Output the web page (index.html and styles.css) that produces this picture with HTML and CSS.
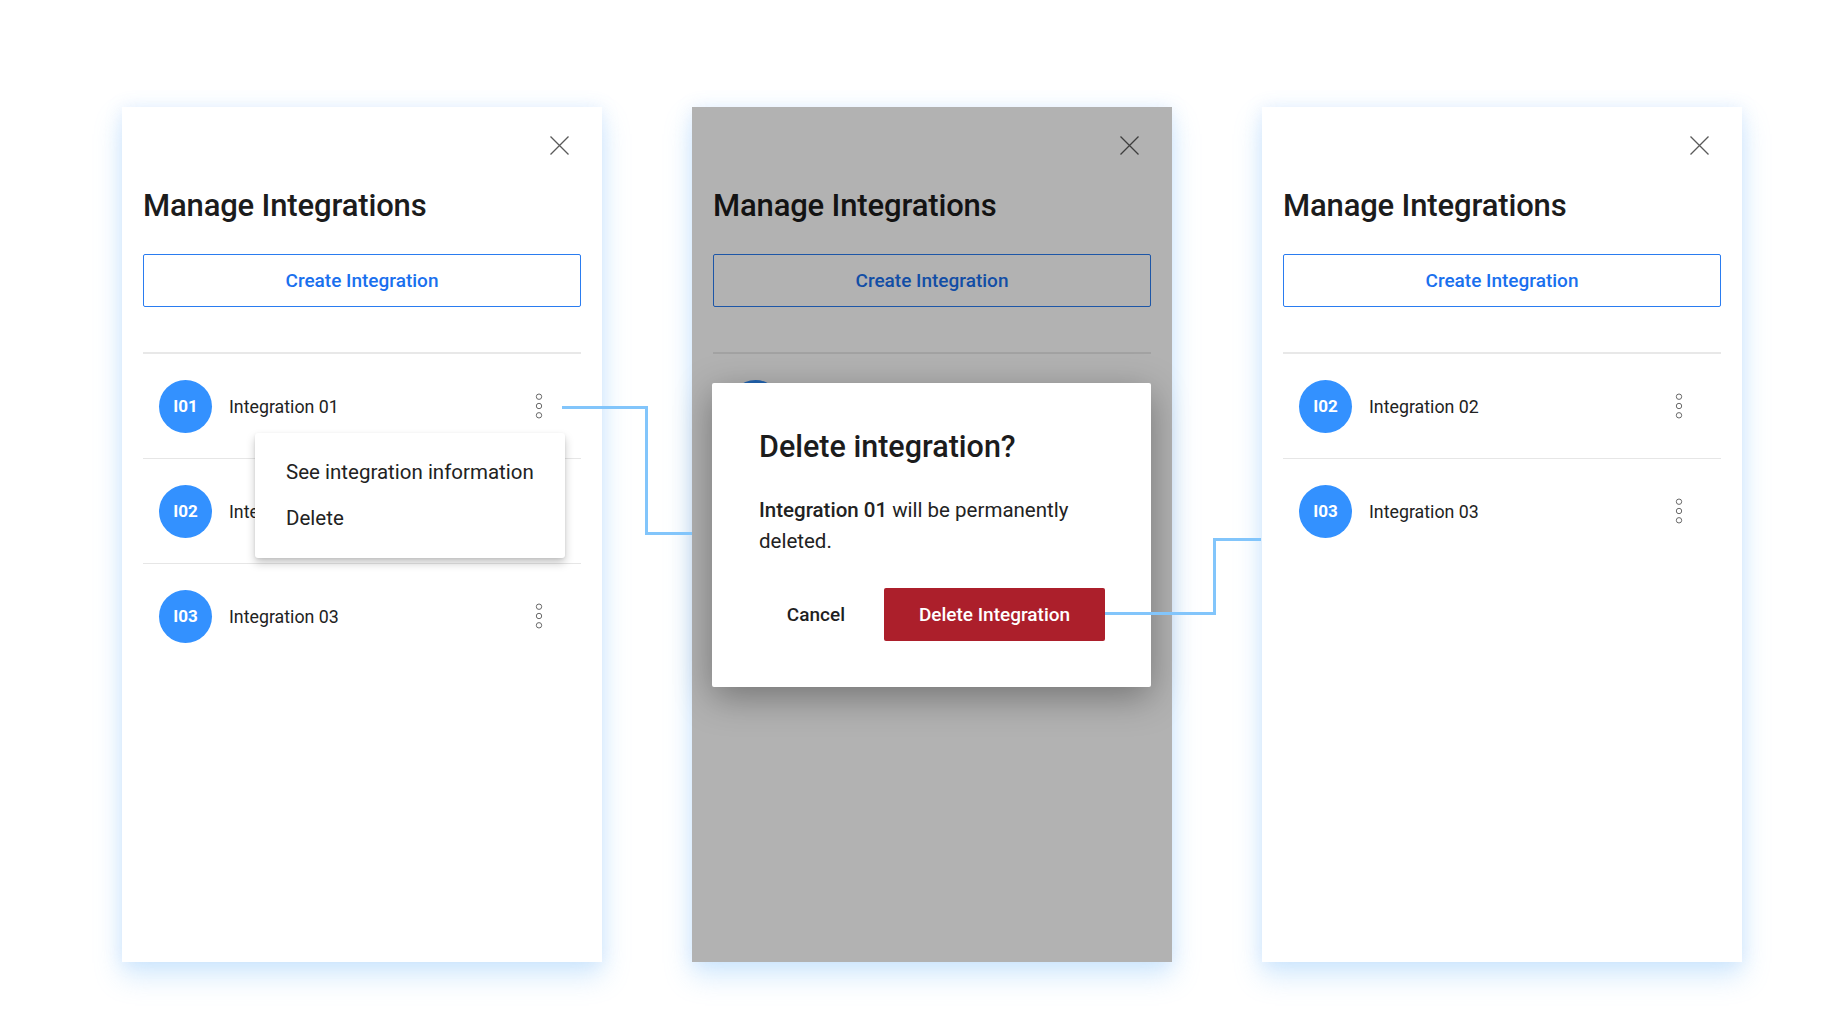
FILE: index.html
```html
<!DOCTYPE html>
<html lang="en">
<head>
<meta charset="utf-8">
<title>Manage Integrations – delete flow</title>
<link rel="stylesheet" href="styles.css">
</head>
<body>
<div class="stage">
  <!-- Panel 1: menu open -->
  <section class="panel">
    <div class="panel-top">
      <button class="close" aria-label="Close">
        <svg width="19" height="19" viewBox="0 0 19 19"><path d="M0.5 0.5L18.5 18.5M18.5 0.5L0.5 18.5" stroke="#5a5a5a" stroke-width="1.3" fill="none"/></svg>
      </button>
    </div>
    <h1 class="title">Manage Integrations</h1>
    <button class="create">Create Integration</button>
    <div class="list">
      <div class="row"><div class="avatar">I01</div><span class="name">Integration 01</span><span class="kebab"><svg width="8" height="26" viewBox="0 0 8 26"><circle cx="4" cy="3.7" r="2.7"/><circle cx="4" cy="13" r="2.7"/><circle cx="4" cy="22.3" r="2.7"/></svg></span></div>
      <div class="row"><div class="avatar">I02</div><span class="name">Integration 02</span><span class="kebab"><svg width="8" height="26" viewBox="0 0 8 26"><circle cx="4" cy="3.7" r="2.7"/><circle cx="4" cy="13" r="2.7"/><circle cx="4" cy="22.3" r="2.7"/></svg></span></div>
      <div class="row"><div class="avatar">I03</div><span class="name">Integration 03</span><span class="kebab"><svg width="8" height="26" viewBox="0 0 8 26"><circle cx="4" cy="3.7" r="2.7"/><circle cx="4" cy="13" r="2.7"/><circle cx="4" cy="22.3" r="2.7"/></svg></span></div>
    </div>
    <div class="menu">
      <div class="menu-item">See integration information</div>
      <div class="menu-item">Delete</div>
    </div>
  </section>

  <!-- Panel 2: confirm dialog -->
  <section class="panel">
    <div class="panel-top">
      <button class="close" aria-label="Close">
        <svg width="19" height="19" viewBox="0 0 19 19"><path d="M0.5 0.5L18.5 18.5M18.5 0.5L0.5 18.5" stroke="#5a5a5a" stroke-width="1.3" fill="none"/></svg>
      </button>
    </div>
    <h1 class="title">Manage Integrations</h1>
    <button class="create">Create Integration</button>
    <div class="list" aria-hidden="true">
      <div class="row"><div class="avatar"></div></div>
      <div class="row"><div class="avatar"></div></div>
      <div class="row"><div class="avatar"></div></div>
    </div>
    <div class="scrim"></div>
    <div class="dialog" role="dialog">
      <h2 class="dialog-title">Delete integration?</h2>
      <p class="dialog-body"><strong>Integration 01</strong> will be permanently deleted.</p>
      <div class="dialog-actions">
        <button class="cancel">Cancel</button>
        <button class="danger">Delete Integration</button>
      </div>
    </div>
  </section>

  <!-- Panel 3: result -->
  <section class="panel">
    <div class="panel-top">
      <button class="close" aria-label="Close">
        <svg width="19" height="19" viewBox="0 0 19 19"><path d="M0.5 0.5L18.5 18.5M18.5 0.5L0.5 18.5" stroke="#5a5a5a" stroke-width="1.3" fill="none"/></svg>
      </button>
    </div>
    <h1 class="title">Manage Integrations</h1>
    <button class="create">Create Integration</button>
    <div class="list">
      <div class="row"><div class="avatar">I02</div><span class="name">Integration 02</span><span class="kebab"><svg width="8" height="26" viewBox="0 0 8 26"><circle cx="4" cy="3.7" r="2.7"/><circle cx="4" cy="13" r="2.7"/><circle cx="4" cy="22.3" r="2.7"/></svg></span></div>
      <div class="row"><div class="avatar">I03</div><span class="name">Integration 03</span><span class="kebab"><svg width="8" height="26" viewBox="0 0 8 26"><circle cx="4" cy="3.7" r="2.7"/><circle cx="4" cy="13" r="2.7"/><circle cx="4" cy="22.3" r="2.7"/></svg></span></div>
    </div>
  </section>

  <svg class="connectors" width="1848" height="1024" viewBox="0 0 1848 1024">
    <path d="M562 407.5H646.5V533.5H692" />
    <path d="M1105 613.5H1214.5V539.5H1261" />
  </svg>
</div>
</body>
</html>
```

FILE: styles.css
```css
* { box-sizing: border-box; }

html, body {
  margin: 0;
  padding: 0;
  background: #ffffff;
  font-family: "Roboto", "Liberation Sans", sans-serif;
  color: #1f1f1f;
}

.stage {
  position: relative;
  width: 1848px;
  height: 1024px;
  padding: 107px 0 0 122px;
  display: flex;
  gap: 90px;
  align-items: flex-start;
}

.panel {
  position: relative;
  width: 480px;
  height: 855px;
  background: #ffffff;
  padding: 0 21px;
  display: flex;
  flex-direction: column;
  box-shadow: 0 14px 26px rgba(120, 190, 250, 0.32), 0 0 16px rgba(130, 180, 250, 0.18);
}

.panel-top {
  display: flex;
  justify-content: flex-end;
  padding-top: 29px;
  padding-right: 12px;
  height: 48px;
}

.close {
  width: 19px;
  height: 19px;
  padding: 0;
  margin: 0;
  border: 0;
  background: transparent;
  display: block;
}
.close svg { display: block; }

.title {
  margin: 32px 0 0 0;
  font-size: 31px;
  line-height: 37px;
  font-weight: 500;
  color: #1c1c1c;
  letter-spacing: -0.15px;
}

.create {
  margin-top: 30px;
  height: 53px;
  width: 100%;
  background: #ffffff;
  border: 1.5px solid #2a7cf0;
  border-radius: 2px;
  color: #1a70ee;
  font-family: "Roboto", "Liberation Sans", sans-serif;
  font-size: 19px;
  font-weight: 500;
  padding: 0;
}

.list {
  margin-top: 45px;
  border-top: 2px solid #e8e8e8;
}

.row {
  height: 104px;
  display: flex;
  align-items: center;
  padding-left: 16px;
}
.row + .row {
  height: 105px;
  border-top: 1px solid #e6e6e6;
}

.avatar {
  width: 53px;
  height: 53px;
  border-radius: 50%;
  background: #3391ff;
  color: #ffffff;
  font-size: 17px;
  font-weight: 700;
  display: flex;
  align-items: center;
  justify-content: center;
  flex: none;
}

.name {
  margin-left: 17px;
  font-size: 17.8px;
  color: #222222;
  flex: 1;
}

.kebab {
  width: 8px;
  height: 26px;
  margin-right: 38px;
  display: block;
}
.kebab svg { display: block; }
.kebab circle {
  fill: none;
  stroke: #6a6a6a;
  stroke-width: 1;
}

/* context menu */
.menu {
  position: absolute;
  top: 326px;
  left: 133px;
  width: 310px;
  height: 125px;
  background: #ffffff;
  border-radius: 3px;
  padding: 16px 0 17px 31px;
  box-shadow: 0 5px 10px rgba(0, 0, 0, 0.22), 0 1px 3px rgba(0, 0, 0, 0.08);
}
.menu-item {
  font-size: 20.5px;
  line-height: 46px;
  color: #222222;
}

/* dialog state */
.scrim {
  position: absolute;
  inset: 0;
  background: rgba(0, 0, 0, 0.3);
}

.dialog {
  position: absolute;
  top: 276px;
  left: 20px;
  width: 439px;
  height: 304px;
  background: #ffffff;
  border-radius: 2px;
  padding: 46px 46px 0 47px;
  box-shadow: 0 10px 36px rgba(0, 0, 0, 0.35);
}

.dialog-title {
  margin: 0;
  font-size: 30.5px;
  line-height: 36px;
  font-weight: 500;
  color: #1c1c1c;
}

.dialog-body {
  margin: 30px 0 0 0;
  font-size: 20.5px;
  line-height: 31px;
  color: #222222;
}
.dialog-body strong { font-weight: 500; }

.dialog-actions {
  margin-top: 31px;
  display: flex;
  justify-content: flex-end;
  align-items: center;
}

.cancel {
  border: 0;
  background: transparent;
  padding: 0;
  margin-right: 39px;
  font-family: "Roboto", "Liberation Sans", sans-serif;
  font-size: 19px;
  font-weight: 500;
  color: #1f1f1f;
}

.danger {
  width: 221px;
  height: 53px;
  border: 0;
  border-radius: 2px;
  background: #ac1f2b;
  color: #ffffff;
  font-family: "Roboto", "Liberation Sans", sans-serif;
  font-size: 19px;
  font-weight: 500;
  padding: 0;
}

.connectors {
  position: absolute;
  top: 0;
  left: 0;
  pointer-events: none;
}
.connectors path {
  fill: none;
  stroke: #82c5fb;
  stroke-width: 3;
}
```
